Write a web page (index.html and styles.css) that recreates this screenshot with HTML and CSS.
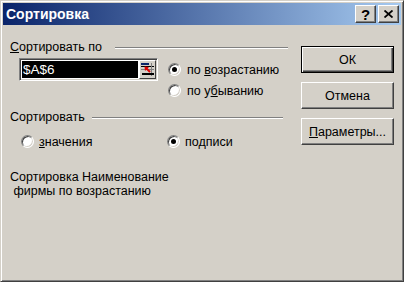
FILE: index.html
```html
<!DOCTYPE html>
<html lang="ru">
<head>
    <meta charset="UTF-8">
    <title>Сортировка</title>
    <link rel="stylesheet" href="styles.css">
</head>
<body>
    <div class="window">
        <div class="titlebar">
            <span class="title">Сортировка</span>
            <span class="cap-btn cap-help">?</span>
            <span class="cap-btn">
                <svg width="9" height="8" viewBox="0 0 9 8">
                    <path d="M0.5 0.5 L8.5 7.5 M8.5 0.5 L0.5 7.5" stroke="#000" stroke-width="1.8"/>
                </svg>
            </span>
        </div>

        <div class="content">
            <div class="left">
                <!-- Sort by -->
                <div class="group-head">
                    <span class="group-label group-label-wide"><u>С</u>ортировать по</span>
                    <span class="etched etched-first"></span>
                </div>
                <div class="sort-row">
                    <div class="refedit">
                        <span class="refedit-field">$A$6</span>
                        <span class="refedit-btn">
                            <svg width="13" height="13" viewBox="0 0 13 13">
                                <rect x="0" y="0" width="8" height="2" fill="#0a246a"/>
                                <rect x="0" y="3" width="13" height="1" fill="#000"/>
                                <rect x="10" y="0" width="1" height="13" fill="#808080"/>
                                <rect x="0" y="6" width="13" height="1" fill="#808080"/>
                                <rect x="1" y="10" width="12" height="2" fill="#000"/>
                                <path d="M9 9 L5 5" stroke="#e00000" stroke-width="2"/>
                                <path d="M3.5 3.5 L8 4 L4 8 Z" fill="#e00000"/>
                            </svg>
                        </span>
                    </div>
                    <div class="radio-col">
                        <label class="radio-item"><span class="radio checked"></span><span>по <u>в</u>озрастанию</span></label>
                        <label class="radio-item"><span class="radio"></span><span>по у<u>б</u>ыванию</span></label>
                    </div>
                </div>

                <!-- Sort what -->
                <div class="group-head group-head-second">
                    <span class="group-label">Сортировать</span>
                    <span class="etched etched-second"></span>
                </div>
                <div class="what-row">
                    <label class="radio-item radio-first"><span class="radio"></span><span><u>з</u>начения</span></label>
                    <label class="radio-item"><span class="radio checked"></span><span>по<u>д</u>писи</span></label>
                </div>

                <p class="summary">Сортировка Наименование
 фирмы по возрастанию</p>
            </div>

            <div class="buttons">
                <button class="btn btn-default">ОК</button>
                <button class="btn">Отмена</button>
                <button class="btn"><u>П</u>араметры...</button>
            </div>
        </div>
    </div>
</body>
</html>
```

FILE: styles.css
```css
body {
    margin: 0;
    padding: 0;
    background: #d4d0c8;
    font-family: "Liberation Sans", Arial, sans-serif;
    font-size: 12.5px;
    color: #000;
}
.window {
    width: 404px;
    height: 282px;
    box-sizing: border-box;
    background: #d4d0c8;
    border: 1px solid;
    border-color: #d4d0c8 #404040 #404040 #d4d0c8;
    box-shadow: inset 1px 1px #fff, inset -1px -1px #808080;
    padding: 2px;
}
.titlebar {
    height: 22px;
    display: flex;
    align-items: center;
    gap: 2px;
    padding: 0 2px 0 3px;
    background: linear-gradient(to right, #0a246a, #a6caf0);
}
.title {
    flex: 1;
    color: #fff;
    font-weight: bold;
    font-size: 14px;
}
.cap-btn {
    width: 21px;
    height: 18px;
    box-sizing: border-box;
    display: flex;
    align-items: center;
    justify-content: center;
    background: #d4d0c8;
    border: 1px solid;
    border-color: #fff #404040 #404040 #fff;
    box-shadow: inset -1px -1px #808080;
}
.cap-help {
    font-weight: bold;
    font-size: 15px;
    line-height: 1;
}
.content {
    display: flex;
    gap: 13px;
    padding: 14px 7px 0 7px;
}
.left {
    width: 279px;
}
.group-head {
    display: flex;
    align-items: center;
    height: 15px;
}
.group-head-second {
    margin-top: 8px;
}
.group-label {
    margin-right: 7px;
}
.group-label-wide {
    margin-right: 13px;
}
.etched {
    flex: 1;
    height: 0;
    border-top: 1px solid #808080;
    border-bottom: 1px solid #fff;
    margin-top: 2px;
}
.etched-second {
    margin-right: 5px;
}
.sort-row {
    display: flex;
    margin-top: 4px;
    height: 43px;
}
.refedit {
    width: 139px;
    height: 23px;
    box-sizing: border-box;
    margin-left: 9px;
    display: flex;
    border: 1px solid;
    border-color: #808080 #fff #fff #808080;
    box-shadow: inset 1px 1px #404040, inset -1px -1px #d4d0c8;
    padding: 1px;
    background: #fff;
}
.refedit-field {
    flex: 1;
    background: #000;
    color: #fff;
    margin: 1px;
    padding-left: 1px;
    font-size: 13.5px;
    line-height: 17px;
}
.refedit-btn {
    width: 17px;
    box-sizing: border-box;
    display: flex;
    align-items: center;
    justify-content: center;
    background: #d4d0c8;
    border: 1px solid;
    border-color: #fff #404040 #404040 #fff;
}
.radio-col {
    margin-left: 10px;
    margin-top: 1px;
}
.radio-item {
    display: flex;
    align-items: center;
    gap: 6px;
    height: 21px;
}
.radio {
    width: 13px;
    height: 13px;
    box-sizing: border-box;
    border-radius: 50%;
    border: 1px solid;
    border-color: #808080 #fff #fff #808080;
    box-shadow: inset 1px 1px #404040, inset -1px -1px #d4d0c8;
    background: #fff;
    display: flex;
    align-items: center;
    justify-content: center;
}
.radio.checked::after {
    content: "";
    width: 5px;
    height: 5px;
    border-radius: 50%;
    background: #000;
}
.what-row {
    display: flex;
    margin-top: 10px;
    height: 15px;
}
.what-row .radio-item {
    height: 15px;
    gap: 5px;
}
.radio-first {
    width: 146px;
    padding-left: 11px;
}
.summary {
    margin: 21px 0 0 0;
    white-space: pre;
    line-height: 14px;
}
.buttons {
    display: flex;
    flex-direction: column;
    gap: 9px;
    margin-top: 7px;
}
.btn {
    width: 93px;
    height: 27px;
    box-sizing: border-box;
    font-family: inherit;
    font-size: 12.5px;
    color: #000;
    background: #d4d0c8;
    border: 1px solid;
    border-color: #fff #404040 #404040 #fff;
    box-shadow: inset -1px -1px #808080;
    padding: 0;
}
.btn-default {
    border: 1px solid #000;
    box-shadow: inset 1px 1px #fff, inset -1px -1px #404040, inset -2px -2px #808080;
}
```
